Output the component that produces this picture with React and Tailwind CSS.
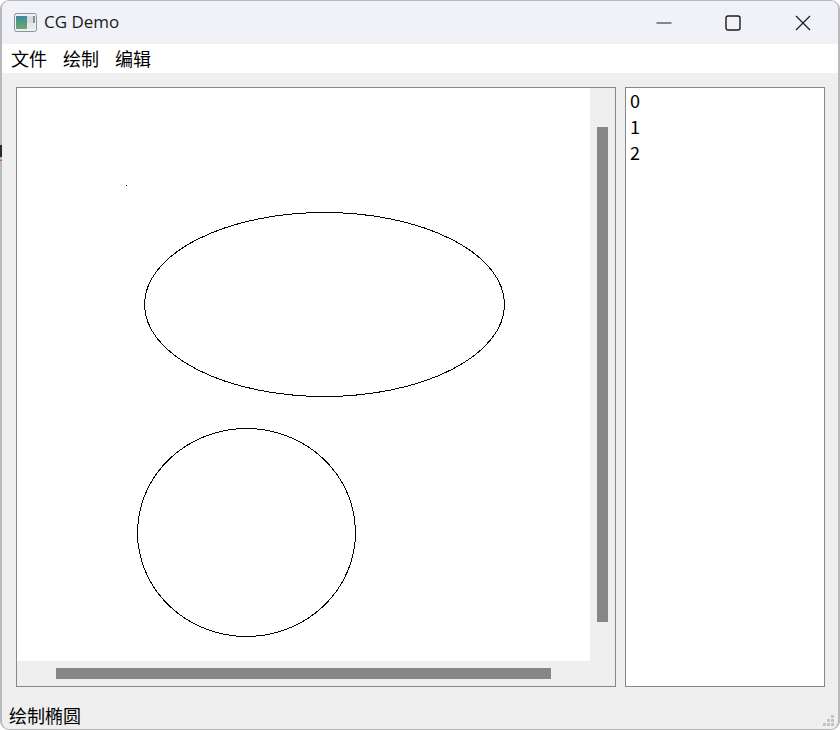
const cjk = { fontFamily: '"Segoe UI", "Noto Sans CJK SC", sans-serif' };

function AppIcon() {
  return (
    <svg width="23" height="19" viewBox="0 0 23 19" className="block">
      <defs>
        <linearGradient id="ico" x1="0" y1="0" x2="0" y2="1">
          <stop offset="0" stopColor="#3f8a9c" />
          <stop offset="1" stopColor="#6aa86c" />
        </linearGradient>
      </defs>
      <rect x="0.5" y="0.5" width="22" height="18" rx="2" fill="#eef1f4" stroke="#8d9299" />
      <rect x="2" y="3" width="11" height="13" fill="url(#ico)" />
      <rect x="13" y="3" width="7" height="7" fill="#d5dcdc" />
      <rect x="13" y="10" width="7" height="6" fill="#e6e8e8" />
      <rect x="19" y="3" width="2" height="7" fill="#7f8f98" />
    </svg>
  );
}

function WindowButtons() {
  return (
    <div className="flex items-center">
      <svg width="16" height="16" viewBox="0 0 16 16" className="mr-[53px]">
        <path d="M0.5 8h15" stroke="#1b1b1b" strokeWidth="1" />
      </svg>
      <svg width="16" height="16" viewBox="0 0 16 16" className="mr-[54px]">
        <rect x="1" y="1" width="14" height="14" rx="2" fill="none" stroke="#1b1b1b" strokeWidth="1.4" />
      </svg>
      <svg width="16" height="16" viewBox="0 0 16 16">
        <path d="M1 1l14 14M15 1L1 15" stroke="#1b1b1b" strokeWidth="1.2" />
      </svg>
    </div>
  );
}

function SizeGrip() {
  return (
    <svg width="12" height="14" viewBox="0 0 12 14" className="absolute right-[3px] bottom-0">
      <g fill="#c4c4c4">
        <rect x="8" y="0" width="3" height="3" />
        <rect x="4" y="4" width="3" height="3" />
        <rect x="8" y="4" width="3" height="3" />
        <rect x="0" y="8" width="3" height="3" />
        <rect x="4" y="8" width="3" height="3" />
        <rect x="8" y="8" width="3" height="3" />
      </g>
    </svg>
  );
}

export default function App() {
  return (
    <div className="relative w-[840px] h-[730px] overflow-hidden bg-white" style={cjk}>
      <div className="w-full h-full flex flex-col bg-[#efefef] border-l-2 border-r-2 border-t border-b border-[#b9b9b9] rounded-[9px] overflow-hidden">
        {/* Title bar */}
        <div className="h-[43px] shrink-0 bg-[#f0f2f8] flex items-center pl-[12px] pr-[27px]">
          <AppIcon />
          <span className="ml-[7px] mb-[2px] text-[17px] text-[#1a1a1a] flex-1" style={{ fontFamily: '"Open Sans", sans-serif' }}>CG Demo</span>
          <WindowButtons />
        </div>

        {/* Menu */}
        <div className="h-[29px] shrink-0 bg-white flex items-center pl-[9px] pb-[1px] gap-[16px] text-[18px] leading-none text-black">
          <span>文件</span>
          <span>绘制</span>
          <span>编辑</span>
        </div>

        {/* Central area */}
        <div className="flex gap-[9px] pl-[14px] pt-[14px]">
          <div className="w-[600px] h-[600px] border border-[#858892] flex bg-[#efefef]">
            <div className="w-[573px] flex flex-col">
              <svg width="573" height="573" viewBox="17 88 573 573" className="block bg-white" shapeRendering="crispEdges">
                <ellipse cx="324.5" cy="304.5" rx="180" ry="92" fill="none" stroke="#000" strokeWidth="1" />
                <ellipse cx="246.5" cy="532.5" rx="109" ry="104" fill="none" stroke="#000" strokeWidth="1" />
                <rect x="126" y="185" width="1" height="1" fill="#000" />
              </svg>
              <div className="ml-[39px] mt-[7px] w-[495px] h-[11px] bg-[#878787]" />
            </div>
            <div className="ml-[7px] mt-[39px] w-[11px] h-[495px] bg-[#878787]" />
          </div>

          <div className="w-[200px] h-[600px] border border-[#858892] bg-white pl-[4px] text-[18px] leading-[26px] text-black">
            <div className="-mt-px">0</div>
            <div>1</div>
            <div>2</div>
          </div>
        </div>

        {/* Status bar */}
        <div className="relative flex-1 flex items-end pl-[7px] pb-px text-[18px] leading-[26px] text-black">
          <span>绘制椭圆</span>
          <SizeGrip />
        </div>
      </div>

      {/* Window behind, showing at the left edge */}
      <div className="absolute left-0 top-[145px] w-[2px] h-[12px] bg-[#2a2a2a]" />
      <div className="absolute left-0 top-[160px] w-[2px] h-px bg-[#e0504a]" />
    </div>
  );
}
